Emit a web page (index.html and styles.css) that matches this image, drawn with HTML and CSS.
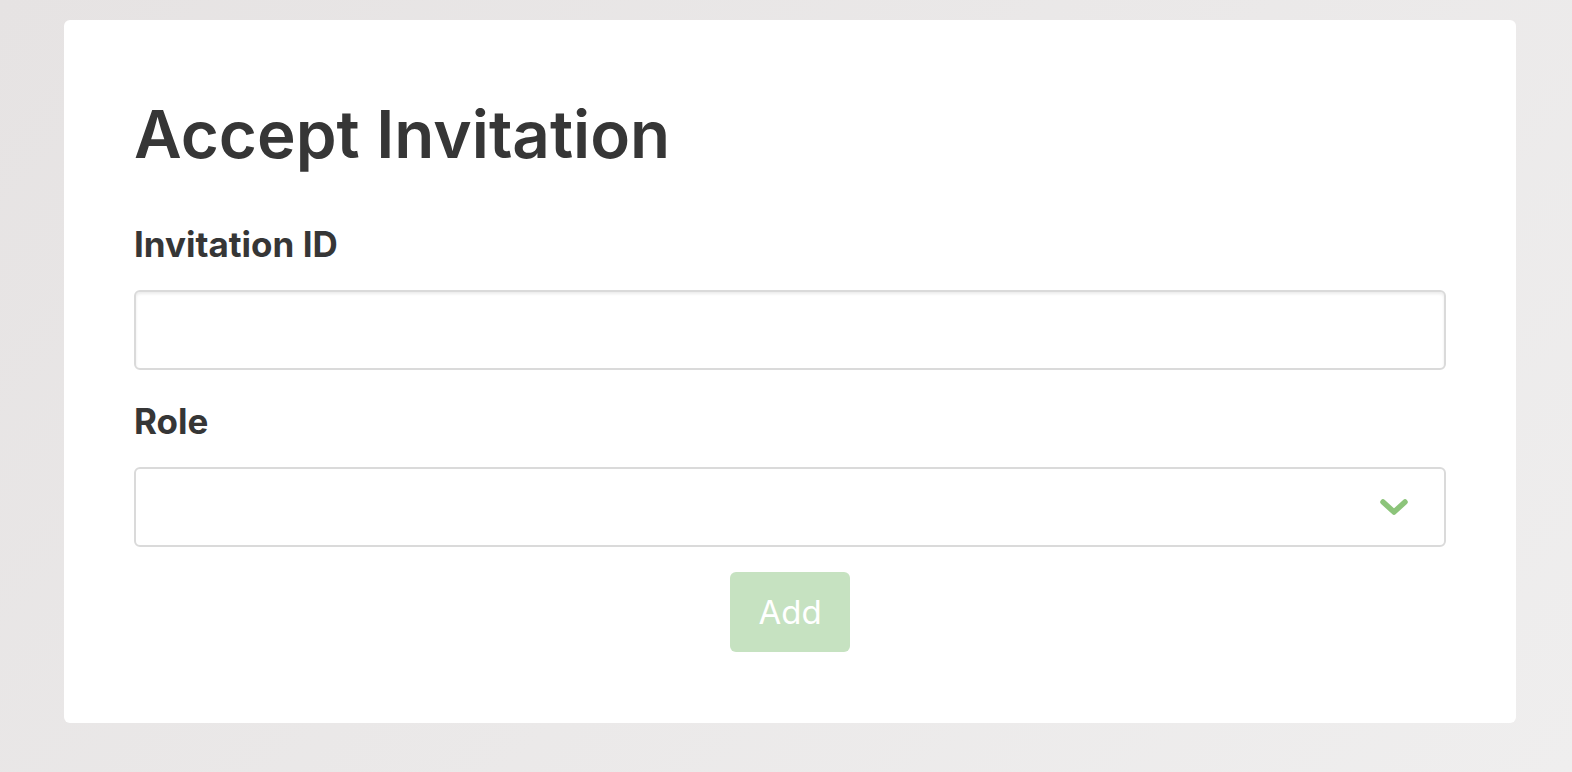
FILE: index.html
```html
<!DOCTYPE html>
<html>
<head>
<meta charset="utf-8">
<link rel="stylesheet" href="styles.css">
</head>
<body>
<div class="page">
  <div class="card">
    <h1 class="title">Accept Invitation</h1>
    <form class="form">
      <label class="label" for="inv">Invitation ID</label>
      <input class="input" id="inv" type="text">
      <label class="label label-role" for="role">Role</label>
      <div class="select">
        <svg class="chevron" width="30" height="20" viewBox="0 0 30 20"><path d="M4 5 L15 15 L26 5" fill="none" stroke="#8cc47a" stroke-width="5.5" stroke-linecap="round" stroke-linejoin="round"/></svg>
      </div>
      <div class="actions">
        <button class="btn" type="button">Add</button>
      </div>
    </form>
  </div>
</div>
</body>
</html>
```
FILE: styles.css
```css
* { box-sizing: border-box; }
html, body { margin: 0; height: 100%; }
body {
  background: linear-gradient(135deg, #e6e3e3 0%, #efeeee 100%);
  font-family: Inter, "Noto Sans", sans-serif;
  color: #363636;
}
.page {
  padding: 20px 56px 49px 64px;
  height: 100%;
}
.card {
  background: #fff;
  border-radius: 6px;
  padding: 82px 70px 70px 70px;
  height: 703px;
}
.title {
  margin: 0 0 59px 0;
  font-size: 65.5px;
  font-weight: 600;
  line-height: 1;
}
.form { display: flex; flex-direction: column; }
.label {
  font-size: 35px;
  font-weight: 700;
  line-height: 1;
  margin-bottom: 28px;
}
.label-role { margin-top: 34px; }
.input, .select {
  height: 80px;
  border: 2px solid #dadada;
  border-radius: 6px;
  background: #fff;
  width: 100%;
}
.input { box-shadow: inset 0 2px 3px rgba(0,0,0,0.08); outline: none; }
.select {
  display: flex;
  align-items: center;
  justify-content: flex-end;
  padding-right: 35px;
}
.actions { display: flex; justify-content: center; margin-top: 25px; }
.btn {
  width: 120px;
  height: 80px;
  border: none;
  border-radius: 6px;
  background: #c6e2c1;
  color: #fff;
  font-family: Inter, sans-serif;
  font-size: 33px;
  font-weight: 400;
}
```
